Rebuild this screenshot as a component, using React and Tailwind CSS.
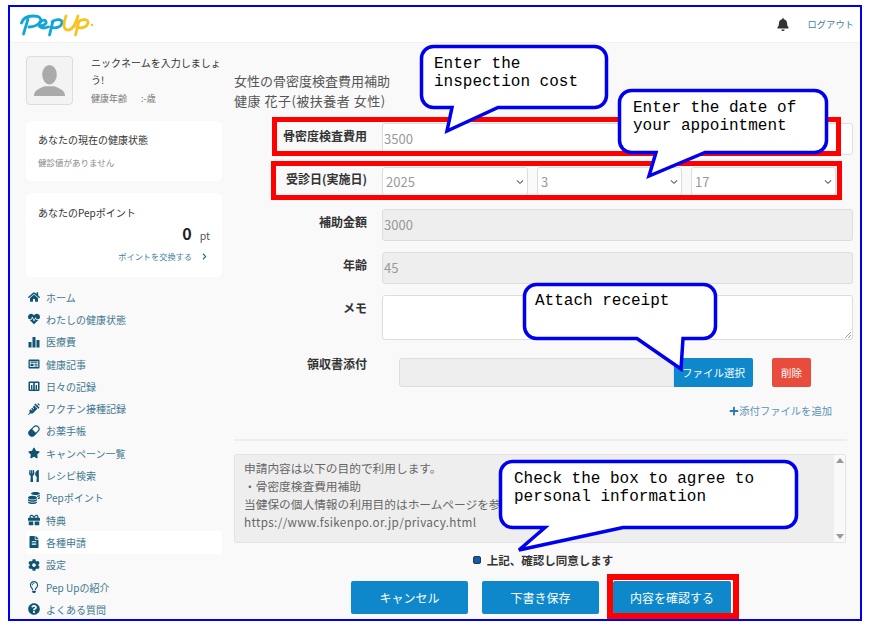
import React from 'react'
import {
  FaHome, FaHeartbeat, FaSyringe, FaStar, FaUtensils, FaCoins, FaGift,
  FaFileAlt, FaCog, FaRegLightbulb, FaQuestionCircle, FaBell, FaChevronRight, FaPlus,
} from 'react-icons/fa'
import { IoIosArrowDown } from 'react-icons/io'

function BarsIcon({ className }) {
  return (
    <svg viewBox="0 0 12 12" className={className} fill="currentColor">
      <rect x="0.5" y="6" width="3" height="5.5" />
      <rect x="4.5" y="1" width="3" height="10.5" />
      <rect x="8.5" y="4" width="3" height="7.5" />
    </svg>
  )
}

function NewsIcon({ className }) {
  return (
    <svg viewBox="0 0 12 12" className={className} fill="currentColor">
      <path fillRule="evenodd" d="M1.5 1.5h9a1 1 0 0 1 1 1v7a1 1 0 0 1-1 1h-9a1 1 0 0 1-1-1v-7a1 1 0 0 1 1-1ZM1.8 3v6h8.4V3Z" />
      <rect x="2.5" y="3.5" width="7" height="1.2" />
      <rect x="2.5" y="5.7" width="3" height="2.5" />
      <rect x="6.5" y="5.7" width="3" height="1" />
      <rect x="6.5" y="7.4" width="3" height="1" />
    </svg>
  )
}

function RecordIcon({ className }) {
  return (
    <svg viewBox="0 0 12 12" className={className}>
      <rect x="0.5" y="1.5" width="11" height="9.5" rx="1" fill="currentColor" />
      <rect x="2" y="3" width="3.2" height="6.5" fill="#fff" />
      <rect x="6.8" y="3" width="3.2" height="6.5" fill="#fff" />
      <rect x="3" y="5" width="1.4" height="4.5" fill="currentColor" />
      <rect x="7.6" y="5" width="1.4" height="4.5" fill="currentColor" />
    </svg>
  )
}

function CapsuleIcon({ className }) {
  return (
    <svg viewBox="0 0 12 12" className={className}>
      <g transform="rotate(-45 6 6)">
        <rect x="0.2" y="3" width="11.6" height="6" rx="3" fill="#fff" stroke="currentColor" strokeWidth="1.2" />
        <path d="M3.2 2.4H6V9.6H3.2A3.6 3.6 0 0 1 3.2 2.4Z" fill="currentColor" />
      </g>
    </svg>
  )
}

const navItems = [
  { label: 'ホーム', icon: FaHome },
  { label: 'わたしの健康状態', icon: FaHeartbeat },
  { label: '医療費', icon: BarsIcon },
  { label: '健康記事', icon: NewsIcon },
  { label: '日々の記録', icon: RecordIcon },
  { label: 'ワクチン接種記録', icon: FaSyringe },
  { label: 'お薬手帳', icon: CapsuleIcon },
  { label: 'キャンペーン一覧', icon: FaStar },
  { label: 'レシピ検索', icon: FaUtensils },
  { label: 'Pepポイント', icon: FaCoins },
  { label: '特典', icon: FaGift },
  { label: '各種申請', icon: FaFileAlt, active: true },
  { label: '設定', icon: FaCog },
  { label: 'Pep Upの紹介', icon: FaRegLightbulb },
  { label: 'よくある質問', icon: FaQuestionCircle },
]

function Logo() {
  return (
    <svg viewBox="0 0 74 24" className="w-[74px] h-[24px]" fill="none" strokeLinecap="round" strokeLinejoin="round">
      <g stroke="#12a5d8" strokeWidth="2.8">
        <path d="M1.5 10C3 5 8 3 13 3C20 3 22 6 20 9C18 12 13 14 9 14" />
        <path d="M8 6L3.500 21" />
        <path d="M19 13C23 13 27 11 26 8.500C25 6 20 7.500 19.500 11C19 15 23 16 28 14" />
        <path d="M33 8L29.500 22" />
        <path d="M32 9C36 5.500 43 6 42 10C41 14.500 35 16 30.500 14" />
      </g>
      <g stroke="#f7c31c" strokeWidth="2.8">
        <path d="M46 3C43 10 43 17 48 17C53 17 56 10 58 3" />
        <path d="M59 8L55.500 22" />
        <path d="M58 9C62 5.500 69 6 68 10C67 14.500 61 16 56.500 14" />
      </g>
      <circle cx="72" cy="12" r="1.2" fill="#f7c31c" />
    </svg>
  )
}

function Select({ value, className }) {
  return (
    <div className={`h-[29px] bg-white border border-[#ddd] rounded-[3px] flex items-center justify-between pl-[3px] pr-[2px] text-[13px] text-[#999] ${className}`}>
      <span>{value}</span>
      <IoIosArrowDown className="w-[10px] h-[10px] text-[#555]" />
    </div>
  )
}

function Label({ children, className = '' }) {
  return <div className={`w-[133px] shrink-0 text-right text-[12px] font-bold text-[#333] leading-[16px] ${className}`}>{children}</div>
}

function Callout({ className, textClass, width, height, tail, lines }) {
  const w = width - 3
  const h = height - 3
  const [a, b, tx, ty] = tail
  const d = `M13.5 1.500H${w - 10.500}a12 12 0 0 1 12 12V${h - 10.500}a12 12 0 0 1 -12 12H${b}L${tx} ${ty}L${a} ${h + 1.500}H13.500a12 12 0 0 1 -12 -12V13.500a12 12 0 0 1 12 -12Z`
  return (
    <div className={`absolute ${className}`}>
      <svg className="absolute left-0 top-0 overflow-visible" width={width} height={height}>
        <path d={d} fill="#fff" stroke="#0000f0" strokeWidth="3.500" strokeLinejoin="miter" />
      </svg>
      <div className={`absolute font-['Liberation_Mono',monospace] text-[16px] leading-[18px] text-black whitespace-pre ${textClass}`}>
        {lines.join('\n')}
      </div>
    </div>
  )
}

export default function App() {
  return (
    <div className="relative w-[869px] h-[625px] overflow-hidden bg-white pl-2 pt-[5px] font-['Noto_Sans_CJK_JP','Noto_Sans',sans-serif]">
      <div className="w-[854px] h-[616px] border-2 border-[#0000f0] bg-[#f9f9f9] overflow-hidden">
        <header className="h-[36px] bg-white border-b border-[#f2f2f2] flex items-center pl-[10px] pr-[6px]">
          <Logo />
          <FaBell className="ml-auto w-[12px] h-[13px] text-[#333]" />
          <a className="ml-[19px] text-[9.3px] text-[#41829f]">ログアウト</a>
        </header>

        <div className="flex">
          <aside className="w-[196px] ml-4 shrink-0">
            <div className="flex mt-[13px]">
              <div className="w-[47px] h-[49px] border border-[#ddd] rounded-[4px] bg-[#f3f3f3] overflow-hidden p-[3px]">
                <svg viewBox="0 0 40 42" className="w-full h-full" fill="#aaa">
                  <ellipse cx="20" cy="15" rx="7.500" ry="10" />
                  <path d="M4 37C4 31 10 29 15 27L25 27C30 29 36 31 36 37Z" />
                </svg>
              </div>
              <div className="ml-[18px] w-[130px]">
                <div className="text-[10px] leading-[17px] mt-[-2px] text-[#333]">ニックネームを入力しましょう!</div>
                <div className="text-[9px] leading-[12px] mt-[5px] text-[#777]">健康年齢<span className="ml-[14px]">:-歳</span></div>
              </div>
            </div>

            <div className="mt-[16px] h-[60px] bg-white rounded-[5px] px-3 pt-[12px]">
              <div className="text-[10px] leading-[14px] text-[#333]">あなたの現在の健康状態</div>
              <div className="text-[8.5px] leading-[12px] mt-[9px] text-[#888]">健診値がありません</div>
            </div>

            <div className="mt-[12px] h-[84px] bg-white rounded-[5px] px-3 pt-[13px]">
              <div className="text-[10px] leading-[14px] text-[#333]">あなたのPepポイント</div>
              <div className="flex justify-end items-baseline mt-[2px] leading-[22px]">
                <span className="text-[16px] font-bold text-[#222]">0</span>
                <span className="text-[10.5px] ml-[8px] text-[#555]">pt</span>
              </div>
              <div className="flex justify-end items-center mt-[3px]">
                <span className="text-[8.2px] leading-[12px] text-[#41829f]">ポイントを交換する</span>
                <FaChevronRight className="w-[7px] h-[7px] ml-[9px] mr-[2px] text-[#1c6a8c]" />
              </div>
            </div>

            <nav className="mt-[9px]">
              {navItems.map((item) => (
                <div key={item.label} className={`h-[22.3px] flex items-center pl-[2px] text-[10px] text-[#41788f] ${item.active ? 'bg-white' : ''}`}>
                  <item.icon className="w-[12px] h-[12px] text-[#0f5473] shrink-0" />
                  <span className="ml-[6px]">{item.label}</span>
                </div>
              ))}
            </nav>
          </aside>

          <main className="ml-[12px] w-[619px]">
            <div className="mt-[28px] text-[13px] leading-[20px] text-[#555]">女性の骨密度検査費用補助</div>
            <div className="text-[13px] leading-[20px] tracking-[0.5px] text-[#555]">健康 花子(被扶養者 女性)</div>

            <div className="flex mt-[12px] gap-[15px]">
              <Label className="pt-[5px]">骨密度検査費用</Label>
              <div className="w-[471px] h-[32px] bg-white border border-[#ddd] rounded-[3px] flex items-center pl-[1px] pb-[1px] text-[13px] text-[#999]">3500</div>
            </div>

            <div className="flex mt-[12px] gap-[15px]">
              <Label className="pt-[4px]">受診日(実施日)</Label>
              <div className="flex gap-[9px]">
                <Select value="2025" className="w-[146px]" />
                <Select value="3" className="w-[145px]" />
                <Select value="17" className="w-[145px]" />
              </div>
            </div>

            <div className="flex mt-[13px] gap-[15px]">
              <Label className="pt-[5px]">補助金額</Label>
              <div className="w-[471px] h-[32px] bg-[#eee] border border-[#ddd] rounded-[3px] flex items-center pl-[1px] pb-[1px] text-[13px] text-[#999]">3000</div>
            </div>

            <div className="flex mt-[11px] gap-[15px]">
              <Label className="pt-[5px]">年齢</Label>
              <div className="w-[471px] h-[32px] bg-[#eee] border border-[#ddd] rounded-[3px] flex items-center pl-[1px] pb-[1px] text-[13px] text-[#999]">45</div>
            </div>

            <div className="flex mt-[11px] gap-[15px]">
              <Label className="pt-[5px]">メモ</Label>
              <div className="relative w-[471px] h-[45px] bg-white border border-[#ddd] rounded-[3px]">
                <svg className="absolute right-[1px] bottom-[1px] w-[7px] h-[7px]" viewBox="0 0 7 7" stroke="#888" strokeWidth="0.8">
                  <path d="M1 7L7 1M4 7L7 4" />
                </svg>
              </div>
            </div>

            <div className="flex mt-[18px] gap-[15px]">
              <Label className="-mt-[2px] text-[11.6px]">領収書添付</Label>
              <div className="flex ml-[17px]">
                <div className="w-[275px] h-[29px] bg-[#eee] border border-[#ddd] rounded-l-[3px]" />
                <button className="w-[79px] h-[29px] bg-[#0e88cb] text-white text-[10.5px] rounded-r-[2px]">ファイル選択</button>
                <button className="ml-[19px] w-[39px] h-[29px] bg-[#e74c3c] text-white text-[10.5px] rounded-[2px]">削除</button>
              </div>
            </div>

            <div className="flex justify-end items-center mt-[17px] mr-[21px] text-[10.3px] leading-[14px] text-[#5a93b8]">
              <FaPlus className="w-[10px] h-[10px] text-[#2b7cb3]" />
              <span>添付ファイルを追加</span>
            </div>

            <div className="mt-[21px] w-[613px] border-t-2 border-[#eee]" />

            <div className="relative mt-[13px] w-[612px] h-[89px] bg-[#eee] border border-[#e4e4e4] rounded-[2px] pl-[9px] pt-[4px] text-[11.7px] leading-[18px] text-[#666] overflow-hidden">
              <div>申請内容は以下の目的で利用します。</div>
              <div>・骨密度検査費用補助</div>
              <div>当健保の個人情報の利用目的はホームページを参</div>
              <div className="tracking-[0.35px]">https://www.fsikenpo.or.jp/privacy.html</div>
              <div className="absolute right-0 top-0 bottom-0 w-[11px] bg-[#f9f9f9] flex flex-col items-center justify-between py-[3px]">
                <div className="w-0 h-0 border-x-[4px] border-x-transparent border-b-[5px] border-b-[#999]" />
                <div className="w-0 h-0 border-x-[4px] border-x-transparent border-t-[5px] border-t-[#999]" />
              </div>
            </div>

            <div className="flex items-center justify-center mt-[9px] w-[618px]">
              <div className="shrink-0 w-[8px] h-[8px] rounded-[2px] bg-[#0a5fb0] border border-[#333]" />
              <span className="ml-[6px] text-[11.5px] font-bold leading-[16px] text-[#333] whitespace-nowrap">上記、確認し同意します</span>
            </div>

            <div className="flex mt-[13px] ml-[117px] gap-[14px] text-white text-[12px]">
              <button className="w-[117px] h-[33px] bg-[#0e88cb] rounded-[2px]">キャンセル</button>
              <button className="w-[117px] h-[33px] bg-[#0e88cb] rounded-[2px]">下書き保存</button>
              <button className="w-[118px] h-[33px] bg-[#0e88cb] rounded-[2px]">内容を確認する</button>
            </div>
          </main>
        </div>
      </div>

      {/* red highlight boxes drawn over the form */}
      <div className="absolute left-[272px] top-[117px] w-[569px] h-[39px] border-[5px] border-[#ff0000]" />
      <div className="absolute left-[271px] top-[161px] w-[571px] h-[39px] border-[5px] border-[#ff0000]" />
      <div className="absolute left-[607px] top-[574px] w-[132px] h-[45px] border-[6px] border-[#ff0000]" />

      <Callout className="left-[420px] top-[45px] w-[188px] h-[64px]" textClass="left-[14px] top-[10px]" width={188} height={64} tail={[32, 78, 27, 86]} lines={['Enter the', 'inspection cost']} />
      <Callout className="left-[618px] top-[89px] w-[210px] h-[65px]" textClass="left-[15px] top-[10px]" width={210} height={65} tail={[38, 87, 31, 87]} lines={['Enter the date of', 'your appointment']} />
      <Callout className="left-[523px] top-[283px] w-[194px] h-[57px]" textClass="left-[12px] top-[9px]" width={194} height={57} tail={[114, 160, 158, 86]} lines={['Attach receipt']} />
      <Callout className="left-[499px] top-[460px] w-[299px] h-[69px]" textClass="left-[15px] top-[10px]" width={299} height={69} tail={[46, 124, 20, 90]} lines={['Check the box to agree to', 'personal information']} />
    </div>
  )
}
